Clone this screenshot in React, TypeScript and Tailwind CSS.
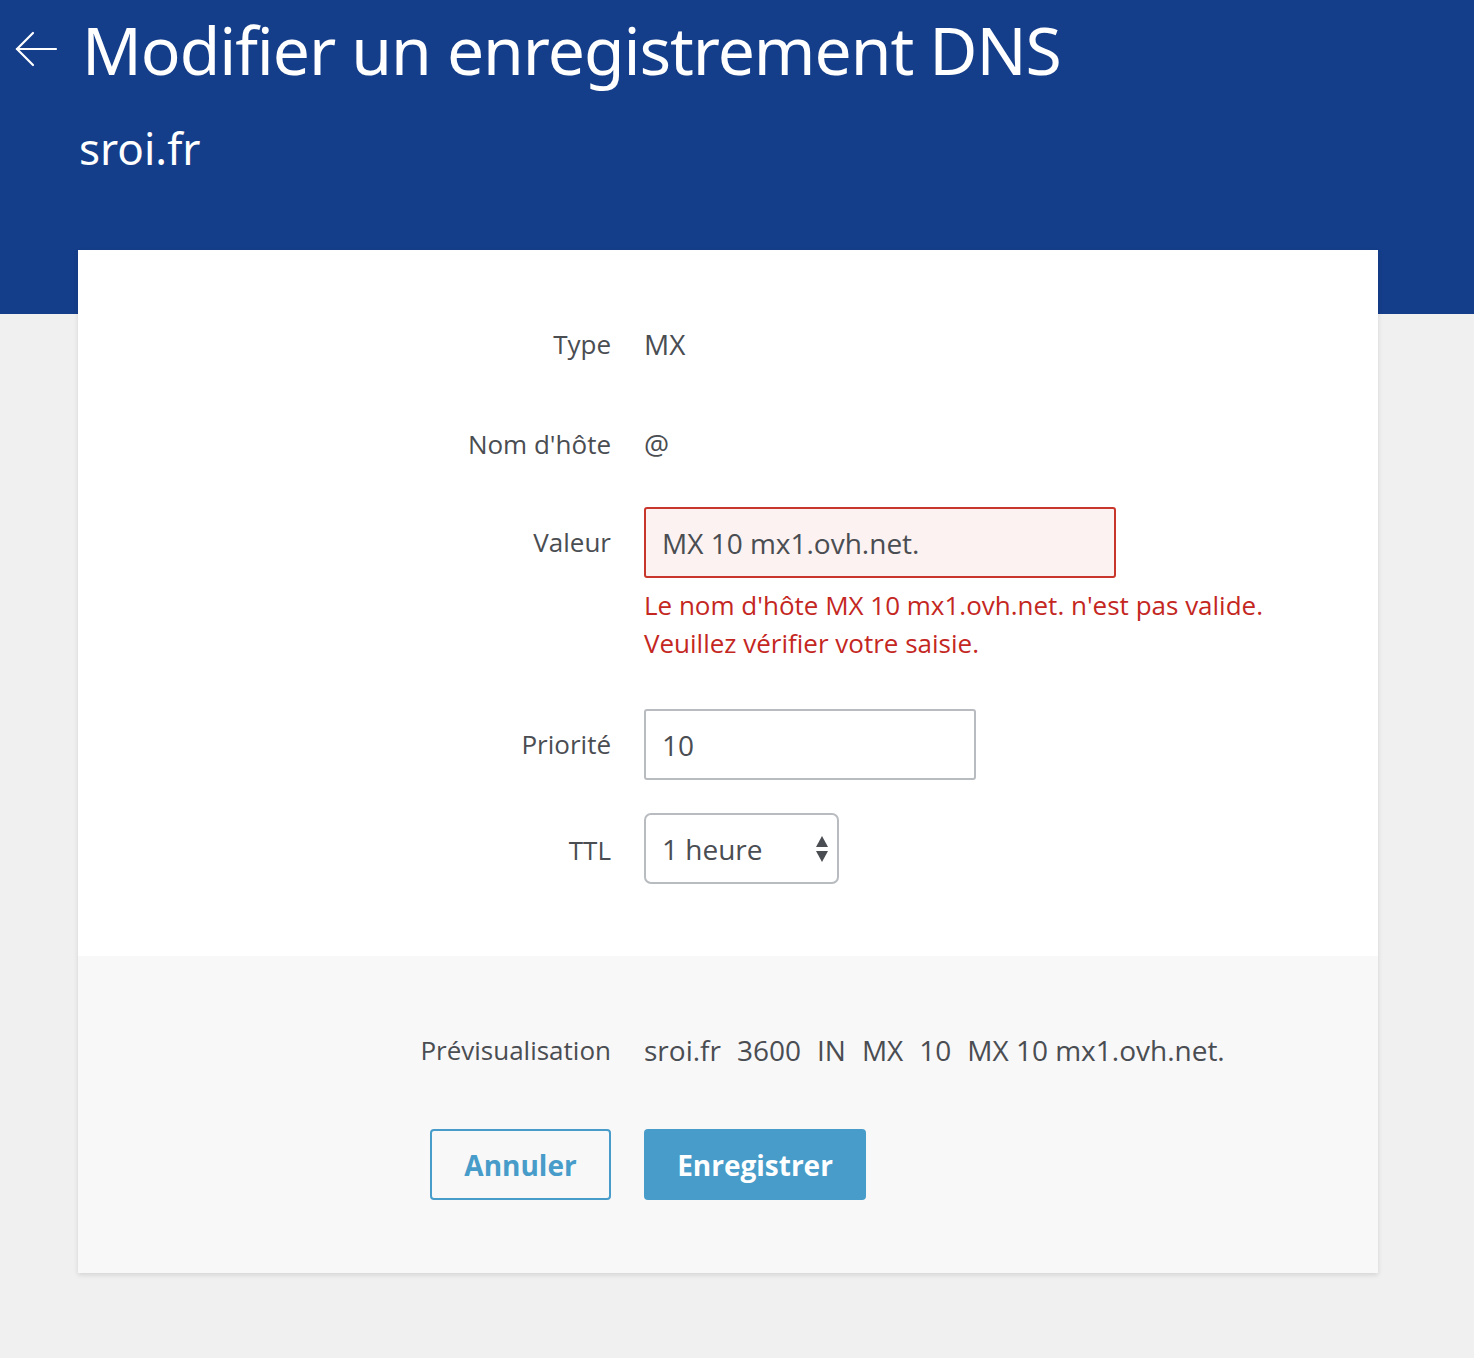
import React from "react";

const body = { fontFamily: '"Open Sans", "Noto Sans", sans-serif' };

function Label({ children }: { children: React.ReactNode }) {
  return (
    <div className="w-[533px] shrink-0 text-right text-[26px] text-[#4a4d52]">
      {children}
    </div>
  );
}

export default function App() {
  return (
    <div className="min-h-[1358px] bg-[#f0f0f0]" style={body}>
      <div className="h-[314px] bg-[#153e8a] text-white">
        <div className="flex items-center pt-[9px]">
          <svg width="44" height="36" viewBox="0 0 44 36" className="ml-[14px] mr-[24px]" fill="none" stroke="white" strokeWidth="2.2" strokeLinecap="round">
            <path d="M42 18H3" />
            <path d="M19 2L3 18L19 34" />
          </svg>
          <h1 className="text-[66px] leading-[80px] tracking-[-1.05px]" style={{ fontFamily: '"Noto Sans", sans-serif' }}>
            Modifier un enregistrement DNS
          </h1>
        </div>
        <div className="ml-[79px] mt-[31px] text-[44px] leading-[56px]" style={{ fontFamily: '"Noto Sans", sans-serif' }}>
          sroi.fr
        </div>
      </div>

      <div className="relative mx-[78px] -mt-[64px] w-[1300px] bg-white shadow-[0_2px_5px_rgba(0,0,0,0.12)]">
        <div className="pt-[70px] pb-[72px]">
          <div className="flex h-[48px] items-center gap-[33px]">
            <Label>Type</Label>
            <div className="text-[28px] text-[#4a4d52]">MX</div>
          </div>
          <div className="mt-[52px] flex h-[48px] items-center gap-[33px]">
            <Label>Nom d'hôte</Label>
            <div className="text-[28px] text-[#4a4d52]">@</div>
          </div>
          <div className="mt-[39px] flex items-start gap-[33px]">
            <div className="flex h-[71px] items-center">
              <Label>Valeur</Label>
            </div>
            <div>
              <div className="flex h-[71px] w-[472px] items-center rounded-[3px] border-2 border-[#c9372c] bg-[#fbf2f1] pl-[16px] text-[28px] text-[#4a4d52]">
                MX 10 mx1.ovh.net.
              </div>
              <div className="mt-[8px] text-[26px] leading-[38px] text-[#c4271f]">
                <div>Le nom d'hôte MX 10 mx1.ovh.net. n'est pas valide.</div>
                <div>Veuillez vérifier votre saisie.</div>
              </div>
            </div>
          </div>
          <div className="mt-[47px] flex items-center gap-[33px]">
            <Label>Priorité</Label>
            <div className="flex h-[71px] w-[332px] items-center rounded-[3px] border-2 border-[#b8bbbf] bg-white pl-[16px] text-[28px] text-[#4a4d52]">
              10
            </div>
          </div>
          <div className="mt-[33px] flex items-center gap-[33px]">
            <Label>
              <span className="relative top-[2px]">TTL</span>
            </Label>
            <div className="flex h-[71px] w-[195px] items-center justify-between rounded-[7px] border-2 border-[#b8bbbf] bg-white pl-[16px] pr-[8px] text-[28px] text-[#4a4d52]">
              <span>1 heure</span>
              <svg width="14" height="28" viewBox="0 0 14 28" fill="#4a4d52">
                <path d="M7 1L13 12H1Z" />
                <path d="M7 27L13 16H1Z" />
              </svg>
            </div>
          </div>
        </div>

        <div className="bg-[#f8f8f8] pt-[70px] pb-[73px]">
          <div className="flex h-[48px] items-center gap-[33px]">
            <Label>Prévisualisation</Label>
            <div className="flex gap-[16px] text-[28px] text-[#4a4d52]">
              <span>sroi.fr</span>
              <span>3600</span>
              <span>IN</span>
              <span>MX</span>
              <span>10</span>
              <span>MX 10 mx1.ovh.net.</span>
            </div>
          </div>
          <div className="mt-[55px] flex gap-[33px]">
            <div className="flex w-[533px] justify-end">
              <button className="h-[71px] w-[181px] rounded-[4px] border-2 border-[#479cc9] bg-transparent text-[28px] font-bold text-[#479cc9]">
                Annuler
              </button>
            </div>
            <button className="h-[71px] w-[222px] rounded-[4px] bg-[#479cc9] text-[28px] font-bold text-white">
              Enregistrer
            </button>
          </div>
        </div>
      </div>
    </div>
  );
}
